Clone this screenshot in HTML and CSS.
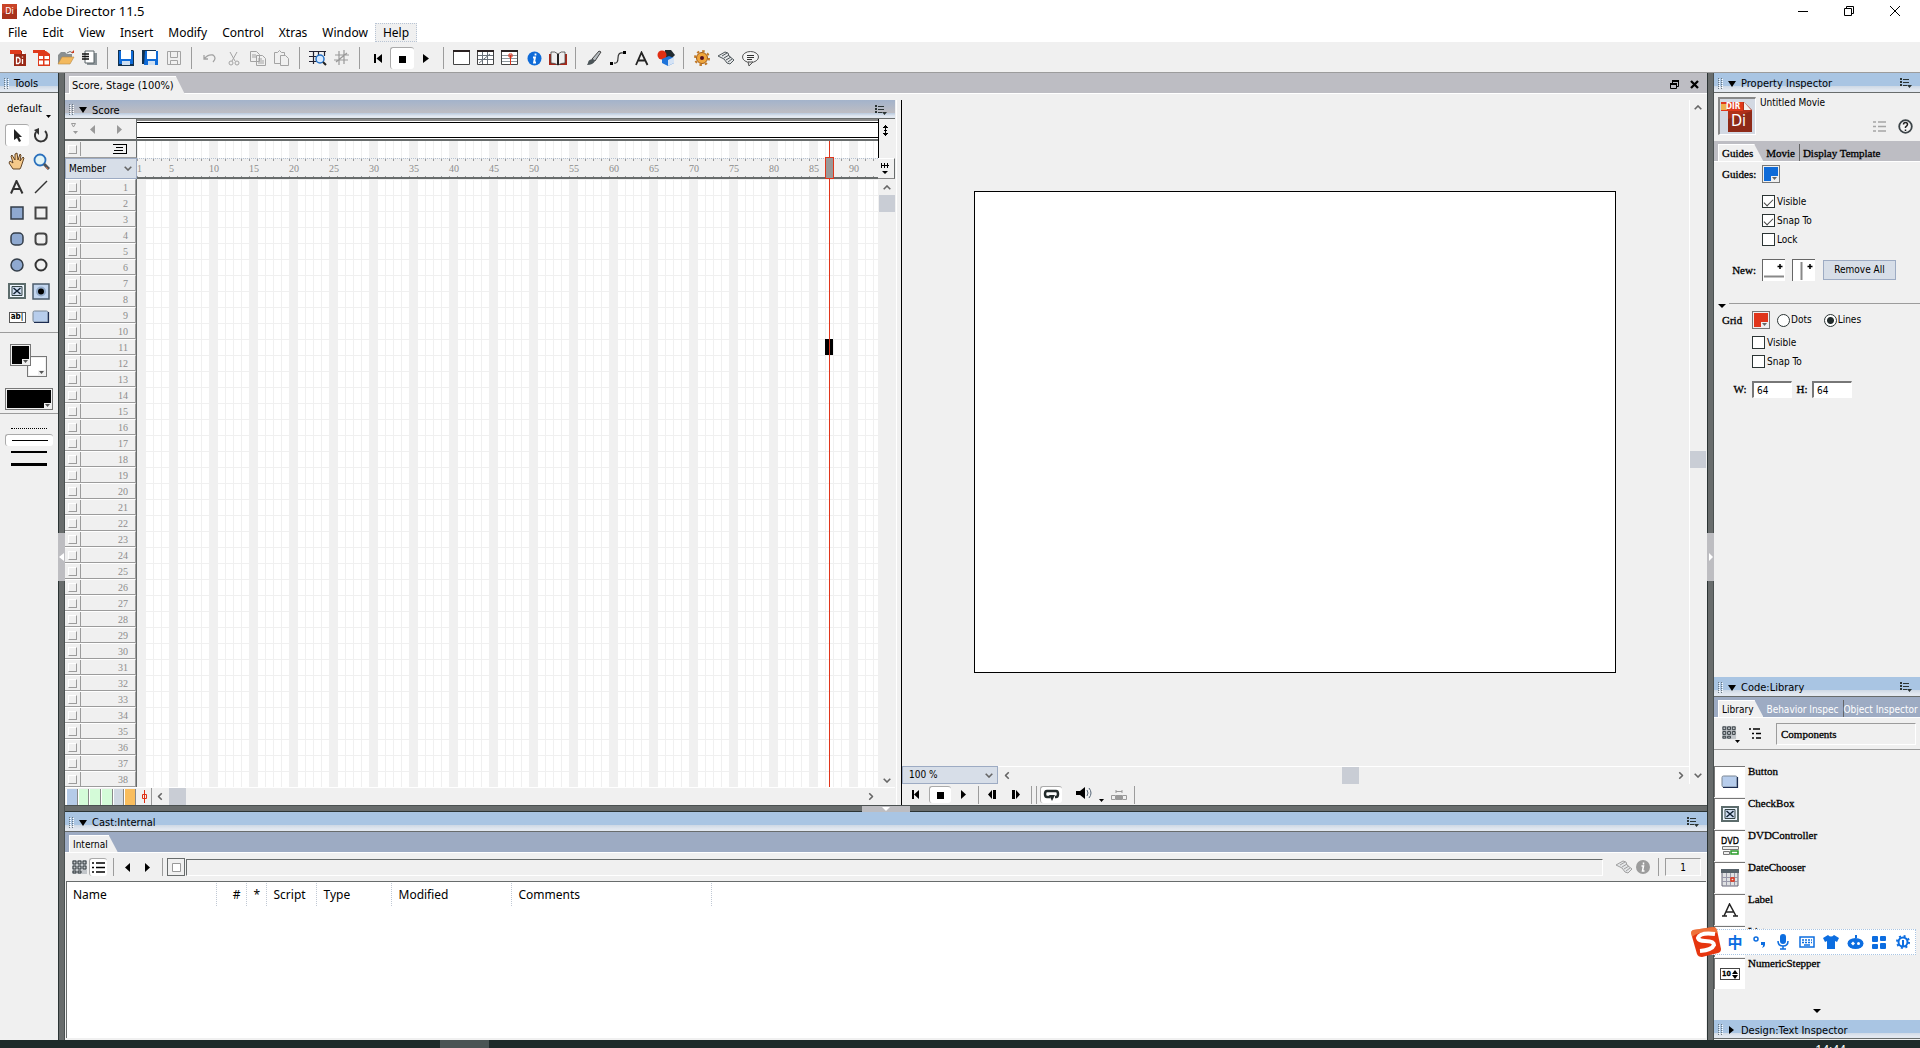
FILE: index.html
```html
<!DOCTYPE html>
<html lang="en">
<head>
<meta charset="utf-8">
<title>Adobe Director 11.5</title>
<link rel="stylesheet" href="styles.css">
</head>
<body>
<svg class="defs" width="0" height="0" aria-hidden="true">
  <symbol id="i-menu" viewBox="0 0 12 10"><path d="M0 0h2v2H0zM0 3h2v2H0zM0 6h2v2H0zM3 1h6v1H3zM3 4h6v1H3zM3 7h4v1H3zM7 7h5L9.500 10z" fill="#2b3434"/></symbol>
  <symbol id="i-grip" viewBox="0 0 5 12"><path d="M0 0h1v1H0zM0 2h1v1H0zM0 4h1v1H0zM0 6h1v1H0zM0 8h1v1H0zM0 10h1v1H0zM3 0h1v1H3zM3 2h1v1H3zM3 4h1v1H3zM3 6h1v1H3zM3 8h1v1H3zM3 10h1v1H3z" fill="#6c7880"/><path d="M1 1h1v1H1zM1 3h1v1H1zM1 5h1v1H1zM1 7h1v1H1zM1 9h1v1H1zM4 1h1v1H4zM4 3h1v1H4zM4 5h1v1H4zM4 7h1v1H4zM4 9h1v1H4z" fill="#fff"/></symbol>
  <symbol id="i-down" viewBox="0 0 8 6"><path d="M0 0h8L4 6z"/></symbol>
  <symbol id="i-chev" viewBox="0 0 8 5"><path d="M.7.700L4 4 7.300.7" fill="none" stroke="currentColor" stroke-width="1.600"/></symbol>
  <symbol id="i-checkbox" viewBox="0 0 18 16"><path d="M1 1h16v14H1z" fill="#eef6ff" stroke="#5c6c6c" stroke-width="2"/><path d="M4 3.500h10v9H4z" fill="#cfdcf0" stroke="#344"/><path d="M5.500 5l7 6M12.500 5l-7 6" stroke="#123" stroke-width="1.500"/></symbol>
  <symbol id="i-button" viewBox="0 0 18 14"><rect x="1" y="1" width="15" height="11" rx="1.500" fill="#b7cdec" stroke="#7b8794"/><path d="M2 12.500h14.500V2" fill="none" stroke="#1c2c50" stroke-width="1.200"/></symbol>
  <symbol id="i-thumbs" viewBox="0 0 16 16"><path d="M0 1h15v14H0z" fill="#c2c6ca"/><path d="M1 2h3v3H1zM6 2h3v3H6zM11 2h3v3h-3zM1 7h3v3H1zM6 7h3v3H6zM11 7h3v3h-3zM1 12h3v2H1zM6 12h3v2H6z" fill="none" stroke="#30383c"/></symbol>
  <symbol id="i-behavior" viewBox="0 0 18 14"><path d="M1 5l7-4 3 1 1 3 5 4-4 4-3-1-3-4z" fill="#e4e6e8" stroke="currentColor"/><path d="M5 5l5-3M7 7l5-3M9 9l5-3M11 11l4-3" stroke="currentColor"/></symbol>
  <symbol id="i-di" viewBox="0 0 16 16"><path d="M0 0h16v16H0z" fill="#a8321c"/><path d="M0 0h16v5L0 10z" fill="#c94427"/></symbol>
</svg>

<header class="titlebar">
  <span class="app-icon"><svg width="15" height="15"><use href="#i-di"/></svg><b>Di</b></span>
  <h1>Adobe Director 11.5</h1>
  <div class="window-buttons">
    <button aria-label="Minimize"><svg width="10" height="10"><path d="M0 5.500h10" stroke="#000"/></svg></button>
    <button aria-label="Restore"><svg width="10" height="10"><path d="M.5 2.500h7v7h-7zM2.500 2.500v-2h7v7h-2" fill="none" stroke="#000"/></svg></button>
    <button aria-label="Close"><svg width="10" height="10"><path d="M0 0l10 10M10 0L0 10" stroke="#000"/></svg></button>
  </div>
</header>
<nav class="menubar">
  <a href="#">File</a><a href="#">Edit</a><a href="#">View</a><a href="#">Insert</a><a href="#">Modify</a><a href="#">Control</a><a href="#">Xtras</a><a href="#">Window</a><a href="#" class="hot">Help</a>
</nav>

<div class="toolbar">
  <div class="group">
    <button aria-label="New movie"><svg width="18" height="18"><path d="M5 2h8l4 3v12H5z" fill="#9a2a18"/><path d="M1 1h11v4H1z" fill="#df3a1c"/><path d="M13 1v4h4z" fill="#fff"/><path d="M7.500 8.500h2l1.500 1.500v3l-1.500 1.500h-2zM13.500 10v5M13.500 7.500v1" fill="none" stroke="#fff" stroke-width="1.300"/></svg></button>
    <button aria-label="New cast"><svg width="18" height="18"><path d="M5 2h8l4 3v12H5z" fill="#df3a1c"/><path d="M0 1h12v3H0z" fill="#df3a1c"/><path d="M6 7h4v3H6zM11.500 7H16v3h-4.500zM6 11.500h4v4H6zM11.500 11.500H16v4h-4.500z" fill="#fff"/></svg></button>
    <button aria-label="Open"><svg width="18" height="16"><path d="M1 14V5l3-3h4l2 2h5v3" fill="#8a8f90"/><path d="M1 14L5 7h12l-4 7z" fill="#f3b95e" stroke="#b98a45" stroke-width=".6"/><path d="M10 3q3-3 6 0" fill="none" stroke="#777"/><path d="M14 3h3V0z" fill="#c93a20"/></svg></button>
    <button aria-label="Import"><svg width="16" height="16"><path d="M5 3h10v12H5z" fill="#8c9498"/><path d="M3 1h9v12H3z" fill="#fff" stroke="#596266"/><path d="M0 4h7M0 6.500h7M0 9h7" stroke="#111" stroke-width="1.300"/></svg></button>
  </div>
  <div class="group">
    <button aria-label="Save"><svg width="16" height="16"><path d="M0 0h15l1 1v15H0z" fill="#12314f"/><path d="M1 1h14v13H1z" fill="#0f6bd8"/><path d="M3 0h10v9H3z" fill="#fff"/><path d="M4 11h8v4H4z" fill="#cfe0f2"/></svg></button>
    <button aria-label="Save all"><svg width="17" height="16"><path d="M0 0h14v14H0z" fill="#12314f"/><path d="M3 1h13v14H2z" fill="#0f6bd8"/><path d="M5 1h9v8H5z" fill="#fff"/><path d="M6 11h7v4H6z" fill="#cfe0f2"/></svg></button>
    <button aria-label="Save as Shockwave"><svg width="15" height="15"><path d="M.5.500h13v13H.5zM3.500.500v6h7v-6M3.500 13.500v-4h7v4" fill="none" stroke="#a3a3a3"/></svg></button>
  </div>
  <div class="group">
    <button aria-label="Undo"><svg width="14" height="10"><path d="M1 2v4h4M1 6q4-5 9-4 4 3 0 7" fill="none" stroke="#a3a3a3" stroke-width="1.300"/></svg></button>
    <button aria-label="Cut"><svg width="12" height="15"><path d="M2 1l5 9M9 1L4 10" fill="none" stroke="#a3a3a3"/><circle cx="3" cy="12" r="2" fill="none" stroke="#a3a3a3"/><circle cx="9" cy="12" r="2" fill="none" stroke="#a3a3a3"/></svg></button>
    <button aria-label="Copy"><svg width="16" height="15"><path d="M.5.500h6l3 3v7h-9z M6.500 4.500h6l3 3v7h-9z" fill="#f0f0f0" stroke="#a3a3a3"/><path d="M2 4h4M2 6h4M8 8h4M8 10h6M8 12h6" stroke="#a3a3a3"/></svg></button>
    <button aria-label="Paste"><svg width="16" height="16"><path d="M.5 2.500h3l2-2 2 2h3v11H.5z" fill="none" stroke="#a3a3a3"/><path d="M6.500 5.500h5l3 3v7h-8z" fill="#f0f0f0" stroke="#a3a3a3"/></svg></button>
  </div>
  <div class="group">
    <button aria-label="Find cast member"><svg width="18" height="16"><path d="M0 1.500h17M0 6.500h8M0 11.500h8M4.500 1v13M9.500 1v4M15.500 1v5" stroke="#223" stroke-width="1.200"/><circle cx="11" cy="9" r="4" fill="#d6e9ff" stroke="#2672c8" stroke-width="1.500"/><path d="M14 12l3 3" stroke="#222" stroke-width="2"/></svg></button>
    <button aria-label="Exchange cast members"><svg width="16" height="16"><path d="M1 5h14M0 10h14M5 1v14M10 0v14M2 12l11-9" stroke="#999" stroke-width="1.200" fill="none"/></svg></button>
  </div>
  <div class="group">
    <button aria-label="Rewind"><svg width="8" height="9"><path d="M0 0h2v9H0zM8 0v9L2.500 4.500z"/></svg></button>
    <button aria-label="Stop" class="pressed"><svg width="8" height="8"><path d="M0 1h7v7H0z"/></svg></button>
    <button aria-label="Play"><svg width="6" height="9"><path d="M0 0v9l6-4.500z"/></svg></button>
  </div>
  <div class="group">
    <button aria-label="Stage"><svg width="18" height="16"><path d="M.5.500h16v14H.5z" fill="#fff" stroke="#444"/><path d="M0 0h17v2H0z" fill="#2a2222"/></svg></button>
    <button aria-label="Cast"><svg width="18" height="16"><path d="M.5.500h16v14H.5z" fill="#fff" stroke="#444"/><path d="M0 0h17v2H0z" fill="#2a2222"/><path d="M1 5.500h15M1 9.500h15M5.500 2v12M10.500 2v12M2 13l11-9" stroke="#687078"/></svg></button>
    <button aria-label="Score"><svg width="18" height="16"><path d="M.5.500h16v14H.5z" fill="#fff" stroke="#444"/><path d="M0 0h17v2H0z" fill="#2a2222"/><path d="M1 5.500h15M1 8.500h15M1 11.500h15" stroke="#8d979d"/><path d="M9.500 5v10M8 4h3v3H8z" stroke="#d8321c" fill="none"/></svg></button>
    <button aria-label="Property inspector"><svg width="15" height="15"><circle cx="7.500" cy="7.500" r="7" fill="#0f6bd8"/><path d="M8.500 2.500v2M6 6.500h2l-1 5h2" stroke="#fff" stroke-width="1.800" fill="none"/></svg></button>
    <button aria-label="Library"><svg width="18" height="15"><path d="M0 3h18v11H0z" fill="#a8281a"/><path d="M2 1q4-1 7 2 3-3 7-2v11q-4 0-7 2-3-2-7-2z" fill="#eee" stroke="#444" stroke-width=".8"/><path d="M9 3v11" stroke="#222" stroke-width="2"/></svg></button>
  </div>
  <div class="group">
    <button aria-label="Paint"><svg width="16" height="16"><path d="M6 9l7-8 2 1-6 9z" fill="#b6bcc0" stroke="#333" stroke-width=".9"/><path d="M6 9q-4 1-4 4l-1 2q6 0 8-4z" fill="#4b5458"/></svg></button>
    <button aria-label="Vector shape"><svg width="16" height="14"><path d="M4 12q4 1 4-5t5-5" fill="none" stroke="#333" stroke-width="1.200"/><path d="M0 11h3v3H0zM13 0h3v3h-3z"/></svg></button>
    <button aria-label="Text"><svg width="14" height="15"><path d="M1 14L6.500 1.500 12.500 14M3 9.500h7.500" fill="none" stroke="#222" stroke-width="1.800"/></svg></button>
    <button aria-label="Shockwave 3D"><svg width="18" height="16"><path d="M8 0h6l4 5-5 5-6-3z" fill="#222b30"/><circle cx="5" cy="5" r="4.500" fill="#e02f14"/><path d="M5 9l7-3 5 2v5l-6 3-6-3z" fill="#1f74da"/><path d="M11 10l6-3v6l-6 3z" fill="#d5e3f5"/></svg></button>
  </div>
  <div class="group">
    <button aria-label="Behaviors"><svg width="16" height="16"><circle cx="8" cy="8" r="5.500" fill="#f0a63c" stroke="#a05d1c"/><circle cx="8" cy="8" r="7" fill="none" stroke="#c27a28" stroke-width="2" stroke-dasharray="2.500 3"/><circle cx="8" cy="8" r="2" fill="#512"/></svg></button>
    <button aria-label="Script"><svg width="18" height="14" color="#50585c"><use href="#i-behavior"/></svg></button>
    <button aria-label="Message"><svg width="17" height="15"><ellipse cx="8.500" cy="6" rx="8" ry="5.500" fill="#f4f4f4" stroke="#555"/><path d="M6 11l1 4 4-4z" fill="#ddd" stroke="#555"/><path d="M5 4.500h7M5 6.500h7M5 8.500h5" stroke="#333"/></svg></button>
  </div>
</div>

<div class="workspace">
  <aside class="tools">
    <div class="panel-head"><svg width="5" height="12"><use href="#i-grip"/></svg><h2>Tools</h2></div>
    <button class="tool-view">default<svg width="5" height="3"><path d="M0 0h5L2.500 3z"/></svg></button>
    <div class="tool-grid">
      <button class="pressed" aria-label="Arrow"><svg width="12" height="15"><path d="M2 1v11l3-2 2 4 2-1-2-4h3z" fill="#222"/></svg></button>
      <button aria-label="Rotate"><svg width="16" height="16"><path d="M3 5a6 6 0 1 0 9-1" fill="none" stroke="#333" stroke-width="2"/><path d="M6 1L1 3l5 5z" fill="#333"/></svg></button>
      <button aria-label="Hand"><svg width="18" height="18"><path d="M5 17l-4-6 1-2 3 2-2-7 1-1 3 5V2l2-1 1 7 2-6 1 1-1 6 3-4 1 1-3 9-1 2z" fill="#f5c98a" stroke="#553617" stroke-width=".9"/></svg></button>
      <button aria-label="Magnifier"><svg width="17" height="17"><circle cx="7" cy="7" r="5.500" fill="#e2f4f6" stroke="#2a70bd" stroke-width="1.800"/><path d="M11 11l5 5" stroke="#4c545c" stroke-width="3"/><path d="M13 14l2 2" stroke="#d9662f"/></svg></button>
      <button aria-label="Text"><svg width="14" height="14"><path d="M1 13.500L6.500 1 12.500 13.500M3 9h7.500" fill="none" stroke="#333" stroke-width="2"/></svg></button>
      <button aria-label="Line"><svg width="14" height="14"><path d="M1 13L13 1" stroke="#333" stroke-width="1.500"/></svg></button>
      <button aria-label="Filled rectangle"><svg width="14" height="14"><path d="M1 1h12v12H1z" fill="#8fa9d0" stroke="#333d48" stroke-width="1.500"/></svg></button>
      <button aria-label="Rectangle"><svg width="14" height="14"><path d="M1.500 1.500h11v11h-11z" fill="none" stroke="#444" stroke-width="2"/></svg></button>
      <button aria-label="Filled round rectangle"><svg width="14" height="14"><rect x="1" y="1" width="12" height="12" rx="4" fill="#8fa9d0" stroke="#333d48" stroke-width="1.500"/></svg></button>
      <button aria-label="Round rectangle"><svg width="14" height="14"><rect x="1.500" y="1.500" width="11" height="11" rx="3" fill="none" stroke="#444" stroke-width="2"/></svg></button>
      <button aria-label="Filled ellipse"><svg width="14" height="14"><circle cx="7" cy="7" r="6" fill="#8fa9d0" stroke="#333d48" stroke-width="1.500"/></svg></button>
      <button aria-label="Ellipse"><svg width="14" height="14"><circle cx="7" cy="7" r="5.500" fill="none" stroke="#333" stroke-width="2"/></svg></button>
      <button aria-label="Check box"><svg width="18" height="16"><use href="#i-checkbox"/></svg></button>
      <button aria-label="Radio button"><svg width="18" height="17"><path d="M1 1h16v15H1z" fill="#c3d6ef" stroke="#4c5c6c" stroke-width="1.500"/><circle cx="9" cy="8.500" r="5" fill="#93abc9"/><circle cx="9" cy="8.500" r="3"/></svg></button>
      <button aria-label="Field" class="field-tool"><span>ab|</span></button>
      <button aria-label="Push button"><svg width="18" height="14"><use href="#i-button"/></svg></button>
    </div>
    <div class="tool-colors">
      <button class="swatch back" aria-label="Background color"><svg width="5" height="3"><path d="M0 0h5L2.500 3z" fill="#555"/></svg></button>
      <button class="swatch fore" aria-label="Foreground color"><svg width="5" height="3"><path d="M0 0h5L2.500 3z" fill="#555"/></svg></button>
      <button class="swatch pattern" aria-label="Pattern"><svg width="5" height="3"><path d="M0 0h5L2.500 3z" fill="#555"/></svg></button>
    </div>
    <div class="line-widths">
      <button aria-label="No line"><i class="dotted"></i></button>
      <button aria-label="1 pixel line" class="pressed"><i></i></button>
      <button aria-label="2 pixel line"><i class="two"></i></button>
      <button aria-label="3 pixel line"><i class="three"></i></button>
    </div>
  </aside>

  <div class="splitter"><button aria-label="Collapse tools"><svg width="5" height="8"><path d="M5 0v8L0 4z" fill="#fff"/></svg></button></div>

  <main>
    <div class="doc-tabs">
      <a href="#" class="tab active">Score, Stage (100%)</a>
      <div class="doc-buttons">
        <button aria-label="Restore document"><svg width="9" height="9"><path d="M.5 3.500h6v5h-6zM2.500 3V1.500h6v5H7" fill="none" stroke="#000"/><path d="M0 3h7v2H0zM2 0h7v2H2z"/></svg></button>
        <button aria-label="Close document"><svg width="9" height="9"><path d="M1 1l7 7M8 1L1 8" stroke="#000" stroke-width="2.300"/></svg></button>
      </div>
    </div>

    <div class="documents">
      <section class="score">
        <div class="panel-head inactive"><svg width="5" height="12"><use href="#i-grip"/></svg><svg width="8" height="6"><use href="#i-down"/></svg><h2>Score</h2><button aria-label="Score options"><svg width="12" height="10"><use href="#i-menu"/></svg></button></div>
        <div class="score-grid">
          <div class="marker-nav">
            <svg width="8" height="12"><path d="M1.500.500h4L3.500 4z" fill="none" stroke="#999"/><path d="M3 8h5L5.500 11z" fill="#999"/></svg>
            <svg width="5" height="9"><path d="M5 0v9L0 4.500z" fill="#999"/></svg>
            <svg width="5" height="9"><path d="M0 0v9l5-4.500z" fill="#999"/></svg>
          </div>
          <div class="marker-track"></div>
          <button class="corner edge" aria-label="Show effects channels"><svg width="5" height="11"><path d="M2 0h1v11H2zM0 2h5v1H0zM1 1h3v1H1zM0 8h5v1H0zM1 9h3v1H1zM1 5h3v1H1z"/></svg></button>
          <div class="script-head"><label class="toggle"><input type="checkbox" aria-label="Script channel"></label><svg width="14" height="10"><path d="M0 .5h13M13.500 0v10M0 9.500h13M3 3.500h7M1 6.500h9" stroke="#000"/></svg></div>
          <div class="script-track"></div>
          <div class="corner edge"></div>
          <div class="member-select"><select aria-label="Display"><option>Member</option></select><svg width="8" height="5"><use href="#i-chev"/></svg></div>
          <div class="ruler"><span>1</span><span>5</span><span>10</span><span>15</span><span>20</span><span>25</span><span>30</span><span>35</span><span>40</span><span>45</span><span>50</span><span>55</span><span>60</span><span>65</span><span>70</span><span>75</span><span>80</span><span>85</span><span>90</span></div>
          <button class="corner raised" aria-label="Zoom"><svg width="8" height="12"><path d="M0 2h8v1H0zM0 0h1v5H0zM3 0h1v5H3zM6 0h1v5H6zM1 8h6L4 11z"/></svg></button>
          <ol class="channels" id="channels"></ol>
          <div class="frames"></div>
          <div class="scroll-v"><svg width="8" height="5" class="point-up"><use href="#i-chev"/></svg><i></i><svg width="8" height="5" class="end"><use href="#i-chev"/></svg></div>
          <div class="playhead"><b></b><i></i></div>
        </div>
        <div class="score-foot">
          <div class="colors"><i class="c1"></i><i class="c2"></i><i class="c3"></i><i class="c3"></i><i class="c4"></i><i class="c5"></i></div>
          <button aria-label="Center current frame"><svg width="7" height="13"><path d="M3.500 0v13M1.500 4.500h4v4h-4z" stroke="#e02f14" fill="none"/></svg></button>
          <div class="scroll-h"><svg width="8" height="5" class="point-left"><use href="#i-chev"/></svg><i></i><svg width="8" height="5" class="point-right end"><use href="#i-chev"/></svg></div>
        </div>
      </section>

      <section class="stage">
        <div class="stage-view">
          <div class="stage-area"><div class="canvas"></div></div>
          <div class="scroll-v"><svg width="8" height="5" class="point-up"><use href="#i-chev"/></svg><i></i></div>
        </div>
        <div class="stage-zoom">
          <div class="zoom-select"><select aria-label="Zoom"><option>100 %</option></select><svg width="8" height="5"><use href="#i-chev"/></svg></div>
          <div class="scroll-h"><svg width="8" height="5" class="point-left"><use href="#i-chev"/></svg><i></i><svg width="8" height="5" class="point-right"><use href="#i-chev"/></svg></div>
          <div class="scroll-corner"><svg width="8" height="5"><use href="#i-chev"/></svg></div>
        </div>
        <div class="stage-controls">
          <button aria-label="Rewind"><svg width="7" height="9"><path d="M0 0h2v9H0zM7 0v9L2 4.500z"/></svg></button>
          <button aria-label="Stop" class="pressed"><svg width="7" height="7"><path d="M0 0h7v7H0z"/></svg></button>
          <button aria-label="Play"><svg width="5" height="9"><path d="M0 0v9l5-4.500z"/></svg></button>
          <hr>
          <button aria-label="Step backward"><svg width="8" height="9"><path d="M4 0v9L0 4.500zM5 0h3v9H5z"/></svg></button>
          <button aria-label="Step forward"><svg width="8" height="9"><path d="M4 0v9l4-4.500zM0 0h3v9H0z"/></svg></button>
          <hr class="double">
          <button aria-label="Loop" class="pressed"><svg width="17" height="12"><path d="M7 8H4Q2 8 2 5t2-3h9q2 0 2 3t-2 3h-1" fill="none" stroke="#222b2b" stroke-width="2.500"/><path d="M6 6h6l-3 6z" fill="#222b2b"/></svg></button>
          <button aria-label="Volume" class="wide"><svg width="28" height="15"><path d="M0 4h4l5-4v12L4 8H0z"/><path d="M11 3q2 3 0 6M13 1q4 5 0 10" fill="none" stroke="#567"/><path d="M23 12h5l-2.500 3z"/></svg></button>
          <button aria-label="Selected frames only"><svg width="16" height="10"><path d="M.5 5.500h4v4h-4zM11.500 5.500h4v4h-4zM5 1.500h6M5 0v3M11 0v3" fill="none" stroke="#999"/><path d="M5 5h6v5H5z" fill="#999"/></svg></button>
          <hr>
        </div>
      </section>
    </div>

    <div class="splitter horizontal"><button aria-label="Collapse cast"><svg width="8" height="4"><path d="M0 0h8L4 4z" fill="#fff"/></svg></button></div>

    <section class="cast">
      <div class="panel-head"><svg width="5" height="12"><use href="#i-grip"/></svg><svg width="8" height="6"><use href="#i-down"/></svg><h2>Cast:Internal</h2><button aria-label="Cast options"><svg width="12" height="10"><use href="#i-menu"/></svg></button></div>
      <div class="tabs blue"><a href="#" class="tab active">Internal</a></div>
      <div class="cast-bar">
        <button aria-label="Choose cast"><svg width="16" height="16"><use href="#i-thumbs"/></svg></button>
        <button aria-label="List view" class="pressed"><svg width="13" height="11"><path d="M0 1h2M0 5.500h2M0 10h2M4 1h9M4 5.500h9M4 10h9" stroke="#000" stroke-width="1.500"/></svg></button>
        <hr>
        <button aria-label="Previous member"><svg width="5" height="9"><path d="M5 0v9L0 4.500z"/></svg></button>
        <button aria-label="Next member"><svg width="5" height="9"><path d="M0 0v9l5-4.500z"/></svg></button>
        <hr>
        <button aria-label="Drag member" class="drag"><svg width="9" height="9"><path d="M.5.500h8v8h-8z" fill="#fff" stroke="#999"/></svg></button>
        <input type="text" class="member-name" aria-label="Member name">
        <button aria-label="Member script"><svg width="18" height="14" color="#a0a0a0"><use href="#i-behavior"/></svg></button>
        <button aria-label="Member properties" class="info"><svg width="14" height="14"><circle cx="7" cy="7" r="7" fill="#9c9c9c"/><path d="M7.500 2.500v2M5.500 6h2l-1 5h2" stroke="#fff" stroke-width="1.500" fill="none"/></svg></button>
        <hr>
        <input type="text" class="member-number" aria-label="Member number" value="1">
      </div>
      <div class="cast-list">
        <table>
          <thead><tr><th class="w-name">Name</th><th class="w-num">#</th><th class="w-mod">*</th><th class="w-script">Script</th><th class="w-type">Type</th><th class="w-modified">Modified</th><th class="w-comments">Comments</th></tr></thead>
        </table>
      </div>
    </section>
  </main>

  <div class="splitter"><button aria-label="Collapse inspectors"><svg width="4" height="8"><path d="M0 0v8l4-4z" fill="#fff"/></svg></button></div>

  <aside class="inspectors">
    <section class="properties">
      <div class="panel-head"><svg width="5" height="12"><use href="#i-grip"/></svg><svg width="8" height="6"><use href="#i-down"/></svg><h2>Property Inspector</h2><button aria-label="Inspector options"><svg width="12" height="10"><use href="#i-menu"/></svg></button></div>
      <div class="movie">
        <div class="movie-icon"><svg width="34" height="34"><path d="M8 3h16l8 8v22H8z" fill="#b03019"/><path d="M8 20L32 12v21H8z" fill="#8e2a18"/><path d="M1 3h22v9H1z" fill="#e0391b"/><path d="M1 5h6v6H1z" fill="#eeb04e"/><path d="M24 3v8h7z" fill="#f2f2f2"/></svg><span class="dir">DIR</span><span class="di">Di</span></div>
        <p>Untitled Movie</p>
        <button aria-label="List view mode"><svg width="13" height="11"><path d="M0 1h3M0 5.500h3M0 10h3M5 1h8M5 5.500h8M5 10h8" stroke="#a5a5a5" stroke-width="1.500"/></svg></button>
        <button aria-label="Help"><svg width="15" height="15"><circle cx="7.500" cy="7.500" r="6.300" fill="#f4f4f4" stroke="#3c4448" stroke-width="1.800"/><path d="M5.500 5.500q0-2 2-2t2 2q0 1-2 2.500v1M7.500 10.500v1.500" fill="none" stroke="#222" stroke-width="1.500"/></svg></button>
      </div>
      <div class="tabs grey song"><a href="#" class="tab active">Guides</a><a href="#">Movie</a><a href="#" class="ruled">Display Template</a></div>
      <form class="guides">
        <div class="row"><span class="name">Guides:</span><button type="button" class="swatch mini blue" aria-label="Guide color"><svg width="5" height="3"><path d="M0 0h5L2.500 3z" fill="#666"/></svg></button></div>
        <div class="checks">
          <label><input type="checkbox" checked>Visible</label>
          <label><input type="checkbox" checked>Snap To</label>
          <label><input type="checkbox">Lock</label>
        </div>
        <div class="row new"><span class="name">New:</span>
          <button type="button" class="guide-new" aria-label="New horizontal guide"><svg width="21" height="20"><path d="M0 15.500h20" stroke="#888" stroke-width="2"/><path d="M16 3v5M13.500 5.500h5" stroke="#000" stroke-width="1.500"/></svg></button>
          <button type="button" class="guide-new" aria-label="New vertical guide"><svg width="21" height="20"><path d="M7.500 1v18" stroke="#888" stroke-width="2"/><path d="M16 3v5M13.500 5.500h5" stroke="#000" stroke-width="1.500"/></svg></button>
          <button type="button" class="remove">Remove All</button></div>
        <div class="fold"><svg width="8" height="4"><path d="M0 0h8L4 4z"/></svg></div>
        <div class="row grid-row"><span class="name">Grid</span><button type="button" class="swatch mini red" aria-label="Grid color"><svg width="5" height="3"><path d="M0 0h5L2.500 3z" fill="#666"/></svg></button>
          <label><input type="radio" name="grid">Dots</label><label class="lines"><input type="radio" name="grid" checked>Lines</label></div>
        <div class="checks grid-checks">
          <label><input type="checkbox">Visible</label>
          <label><input type="checkbox">Snap To</label>
        </div>
        <div class="row size"><label for="gw">W:</label><input id="gw" type="text" value="64"><label for="gh">H:</label><input id="gh" type="text" value="64"></div>
      </form>
    </section>
    <section class="library">
      <div class="panel-head"><svg width="5" height="12"><use href="#i-grip"/></svg><svg width="8" height="6"><use href="#i-down"/></svg><h2>Code:Library</h2><button aria-label="Library options"><svg width="12" height="10"><use href="#i-menu"/></svg></button></div>
      <div class="tabs blue"><a href="#" class="tab active">Library</a><a href="#">Behavior Inspec</a><a href="#" class="ruled">Object Inspector</a></div>
      <div class="library-bar">
        <button aria-label="Library list"><svg width="18" height="18"><use href="#i-thumbs" width="15" height="15"/><path d="M13 15h5l-2.500 3z"/></svg></button>
        <button aria-label="Library view"><svg width="12" height="11"><path d="M0 1h2M4 1h7M3 5.500h2M7 5.500h5M3 10h2M7 10h5" stroke="#000" stroke-width="1.500"/></svg></button>
        <input type="text" aria-label="Category" value="Components">
      </div>
      <ul class="components">
        <li><span><svg width="18" height="14"><use href="#i-button"/></svg></span>Button</li>
        <li><span><svg width="18" height="16"><use href="#i-checkbox"/></svg></span>CheckBox</li>
        <li><span class="dvd"><b>DVD</b><svg width="17" height="9"><path d="M.5.500h16v3H.5zM1.500 5.500h6v3h-6z" fill="#eee" stroke="#777"/><path d="M9 5h7v3H9z" fill="none" stroke="#2a9c2a" stroke-width="1.500"/></svg></span>DVDController</li>
        <li><span><svg width="18" height="18"><path d="M1 1h16v16H1z" fill="#dfe1e3" stroke="#667"/><path d="M0 0h18v4H0z" fill="#56626a"/><path d="M1 8.500h16M1 12.500h16M5.500 4v13M9.500 4v13M13.500 4v13" stroke="#99a"/><path d="M10 9h3v3h-3z" fill="none" stroke="#e02f14" stroke-width="1.300"/></svg></span>DateChooser</li>
        <li><span><svg width="16" height="14"><path d="M2 13L7.500 1 14 13M4 9h8M0 13h5M11 13h5" fill="none" stroke="#222" stroke-width="1.500"/></svg></span>Label</li>
        <li><span></span>List</li>
        <li><span><b class="stepper">10<svg width="6" height="9"><path d="M0 4l3-4 3 4zM0 5h6L3 9z"/></svg></b></span>NumericStepper</li>
      </ul>
      <button class="more" aria-label="More components"><svg width="8" height="4"><path d="M0 0h8L4 4z"/></svg></button>
    </section>
    <section class="panel-head design"><svg width="5" height="12"><use href="#i-grip"/></svg><svg width="8" height="8"><path d="M1 0v8l5-4z"/></svg><h2>Design:Text Inspector</h2></section>
  </aside>
</div>

<footer class="taskbar"><i></i><time>14:44</time></footer>

<div class="ime">
  <svg class="ime-logo" width="32" height="32"><path d="M1 7Q1 5 3 4l20-3q3 0 4 3l4 19q0 3-3 4L12 31q-4 0-5-3z" fill="#e6360f"/><path d="M1 7Q1 5 3 4l20-3q3 0 4 3l1 3Q10 4 2 11z" fill="#f39a55" opacity=".6"/><path d="M25 8Q10 6 8 12q1 3 7 3 9 0 9 4-2 5-14 6" fill="none" stroke="#fff" stroke-width="4"/></svg>
  <button aria-label="Input language">中</button>
  <button aria-label="Punctuation"><svg width="12" height="12"><circle cx="3" cy="3" r="2" fill="none" stroke="#0c6de0" stroke-width="1.500"/><path d="M8 6h4v3q0 2-3 3 1-1 1-3H8z"/></svg></button>
  <button aria-label="Voice"><svg width="12" height="16"><rect x="3" y="0" width="6" height="10" rx="3"/><path d="M1 7q0 5 5 5t5-5M6 12v3M3 15h6" fill="none" stroke="#0c6de0" stroke-width="1.500"/></svg></button>
  <button aria-label="Keyboard"><svg width="16" height="12"><path d="M1 1h14v10H1z" fill="none" stroke="#0c6de0" stroke-width="1.500"/><path d="M3 4h10M3 6.500h10" stroke="#0c6de0" stroke-width="1.500" stroke-dasharray="2 1"/><path d="M5 9h6" stroke="#0c6de0" stroke-width="1.500"/></svg></button>
  <button aria-label="Skin"><svg width="16" height="14"><path d="M5 0q3 3 6 0l5 3-2 4-2-1v8H4V6L2 7 0 3z"/></svg></button>
  <button aria-label="Assistant"><svg width="17" height="14"><path d="M8 0h2v3H8z"/><ellipse cx="8.500" cy="8.500" rx="8" ry="5.500"/><path d="M4 8.500l2-2 2 2-2 2z" fill="#fff"/><circle cx="11.500" cy="8.500" r="1.500" fill="#fff"/></svg></button>
  <button aria-label="Toolbox"><svg width="14" height="13"><rect width="6" height="6" rx="1"/><rect x="8" width="6" height="5" rx="1"/><rect y="8" width="6" height="5" rx="1"/><rect x="8" y="7" width="6" height="6" rx="1"/></svg></button>
  <button aria-label="Settings"><svg width="14" height="14"><circle cx="7" cy="7" r="4.500" fill="none" stroke="#0c6de0" stroke-width="2"/><circle cx="7" cy="7" r="6" fill="none" stroke="#0c6de0" stroke-width="2" stroke-dasharray="2 2.700"/><path d="M7 5v7" stroke="#0c6de0" stroke-width="2"/></svg></button>
</div>
<script src="score.js"></script>
</body>
</html>
```
FILE: styles.css
```css
:root {
  --face: #f0f0f0;
  --dark: #686c6c;
  --line: #9c9c9c;
  --blue: #a9c5e3;
  --ui: "DejaVu Sans Condensed", "Noto Sans", sans-serif;
  --menu: "Noto Sans", "Noto Sans CJK SC", sans-serif;
  --song: "Liberation Serif", serif;
}
* { box-sizing: border-box; }
body {
  margin: 0;
  height: 100vh;
  display: flex;
  flex-direction: column;
  overflow: hidden;
  background: var(--face);
  color: #000;
  font: 11px/14px var(--ui);
}
button { border: 0; padding: 0; margin: 0; background: none; font: inherit; color: inherit; display: flex; align-items: center; justify-content: center; flex: none; }
input, select { font: inherit; color: inherit; margin: 0; border-radius: 0; }
h1, h2, p, ul, ol { margin: 0; padding: 0; font: inherit; list-style: none; }
a { color: inherit; text-decoration: none; white-space: nowrap; }
svg { display: block; flex: none; }
i { font-style: normal; }
.defs { position: absolute; }
hr { border: 0; margin: 0; width: 1px; height: 18px; background: var(--line); flex: none; }

.titlebar { height: 22px; background: #fff; display: flex; align-items: center; padding-left: 2px; gap: 6px; font: 13px/20px var(--menu); flex: none; }
.app-icon { display: grid; align-items: center; justify-items: center; }
.app-icon > * { grid-area: 1 / 1; }
.app-icon b { color: #fff; font: 9px/12px var(--ui); }
.window-buttons { margin-left: auto; display: flex; padding-right: 2px; }
.window-buttons button { width: 46px; height: 22px; }
.menubar { height: 22px; background: #fff; border-bottom: 2px solid var(--face); display: flex; padding-top: 1px; font: 12px/18px var(--menu); flex: none; }
.menubar a { padding: 0 7px; height: 19px; border: 1px solid #fff; border-right: 0; }
.menubar .hot { background: var(--face); border: 1px dotted #b8c4d4; }

.toolbar { height: 29px; border-bottom: 1px solid var(--line); padding-left: 6px; display: flex; align-items: center; flex: none; }
.group { display: flex; align-items: center; }
.group + .group { margin-left: 5px; border-left: 1px solid var(--line); padding-left: 6px; }
.group button { width: 24px; height: 22px; }
button.pressed { background: #fff; border-radius: 3px; border-left: 1px solid #aaa; border-top: 1px solid #aaa; }

.workspace { flex: 1; min-height: 0; display: grid; grid-template-columns: 58px 7px minmax(0, 1fr) 7px 206px; }
main { display: flex; flex-direction: column; min-height: 0; }
.splitter { background: var(--dark); border-left: 1px solid #2b3434; border-right: 1px solid #4a5050; display: flex; align-items: center; justify-content: center; }
.splitter button { width: 7px; height: 48px; background: #bdbdc1; margin: 0 -1px; }
.splitter.horizontal { height: 7px; border: 0; border-bottom: 1px solid #2b3434; border-top: 1px solid #4a5050; flex: none; }
.splitter.horizontal button { width: 48px; height: 6px; margin: 0; }

.panel-head { height: 20px; padding: 2px 8px 0 4px; display: flex; align-items: center; gap: 5px; background: linear-gradient(var(--blue) 70%, #d0dae6 71%, #e2e8f0 90%); border-bottom: 1px solid var(--dark); flex: none; }
.panel-head.inactive { height: 19px; background: linear-gradient(#a3b3cb, #bdbdc3 70%, #b6c7dc 71%, #e2e8f0 90%); }
.panel-head button { margin-left: auto; margin-bottom: 1px; }
.panel-head h2 { white-space: nowrap; line-height: 16px; padding-top: 1px; }

/* Tools */
.tool-view { margin: 9px 0 0 7px; gap: 4px; align-items: flex-end; }
.tool-view svg { margin-bottom: -2px; }
.tool-grid { display: grid; grid-template-columns: 24px 24px; grid-auto-rows: 22px; row-gap: 4px; margin: 8px 0 0 5px; }
.field-tool span { width: 17px; height: 11px; border: 1px solid #555; background: #fff; font: bold 8px/8px var(--ui); text-align: center; overflow: hidden; }
.tool-colors { border-top: 1px solid var(--line); border-bottom: 1px solid var(--line); margin-top: 4px; height: 82px; display: grid; grid-template-columns: 17px 4px 16px 6px; grid-template-rows: 12px 10px 11px 11px 22px; padding: 11px 0 0 10px; }
.swatch { background: #000; border: 2px solid var(--face); outline: 1px solid #777; outline-offset: -1px; align-items: flex-end; justify-content: flex-end; }
.swatch svg { background: var(--face); padding: 1px; box-sizing: content-box; }
.swatch.fore { grid-area: 1 / 1 / 3 / 3; }
.swatch.back { grid-area: 2 / 2 / 4 / 4; background: #fff; }
.swatch.pattern { grid-area: 5 / 1 / 6 / 5; margin-left: -5px; }
.line-widths { padding: 8px 0 0 5px; width: 53px; }
.line-widths button { width: 48px; height: 12px; }
.line-widths i { width: 36px; height: 1px; background: #000; }
.line-widths i.dotted { background: none; border-top: 1px dotted #000; }
.line-widths i.two { height: 2px; }
.line-widths i.three { height: 3px; }

/* Tab strips */
.doc-tabs { height: 27px; background: linear-gradient(#bdbdc3 20px, #fff 20px, #fff 21px, var(--face) 21px); display: flex; padding: 3px 7px 7px 4px; flex: none; }
.tab.active { background: var(--face); color: #000; clip-path: polygon(0 0, calc(100% - 9px) 0, 100% 100%, 0 100%); box-shadow: inset 1px 1px #fff; }
.doc-tabs .tab { padding: 3px 11px 0 3px; margin-bottom: -1px; }
.doc-buttons { margin-left: auto; display: flex; gap: 11px; padding-right: 1px; }
.tabs { height: 21px; display: flex; border-bottom: 1px solid #fff; padding: 3px 0 0 4px; overflow: hidden; font-size: 10px; flex: none; }
.tabs.blue { background: #9dabc3; color: #fff; }
.tabs.grey { background: #bdbdc3; }
.tabs a { padding: 3px 4px 0 3px; height: 17px; }
.tabs .tab { padding: 3px 10px 0 4px; }
.tabs .ruled { box-shadow: inset 1px 0 #666; padding: 3px 0 0 1px; }

/* Score */
.documents { display: flex; flex: none; }
.score { flex: 0 0 830px; }
.score-grid { display: grid; grid-template-columns: 72px minmax(0, 1fr) 17px; grid-template-rows: 22px 17px 21px auto; position: relative; }
.marker-nav { display: flex; align-items: center; gap: 12px; padding-left: 5px; border-right: 1px solid var(--dark); border-bottom: 2px solid var(--dark); }
.marker-nav svg + svg + svg { margin-left: 10px; }
.marker-track { border-bottom: 2px solid var(--dark); background: linear-gradient(#888 2px, #fff 2px, #fff 3px, #000 3px, #000 4px, #fff 4px, #fff 18px, #000 18px, #000 19px, #fff 19px); }
.corner { background: var(--face); width: 100%; padding-right: 4px; }
.corner.edge { border-left: 1px solid #000; }
.corner.raised { border-top: 1px solid #fff; border-right: 1px solid var(--dark); border-bottom: 1px solid #888; padding-right: 2px; }
.script-head { display: flex; align-items: center; border-right: 1px solid var(--dark); border-bottom: 1px solid var(--line); }
.script-head svg { margin-left: 32px; }
.script-track { background: linear-gradient(90deg, var(--face) 1px, transparent 1px) 0 2px / 8px 100%, linear-gradient(90deg, transparent 32px, var(--face) 32px) 0 2px / 40px 100%, #fff; }
.member-select, .zoom-select { position: relative; background: #d7dee8; border: 1px solid #9dabc3; color: #444; display: flex; align-items: center; }
.member-select select, .zoom-select select { appearance: none; border: 0; background: none; padding: 0 0 0 3px; width: 100%; color: #000; font-size: 10px; }
.member-select svg, .zoom-select svg { position: absolute; right: 4px; color: #666; }
.ruler { display: flex; overflow: hidden; font: 10px/19px var(--song); color: #8c8c8c; border-top: 1px dotted #b4c0d0; border-bottom: 2px solid var(--dark);
  background: linear-gradient(90deg, var(--line) 1px, transparent 1px) 0 0 / 8px 2px repeat-x, linear-gradient(90deg, var(--line) 1px, transparent 1px) 0 100% / 8px 1px repeat-x; }
.ruler span { flex: 0 0 40px; }
.ruler span:first-child { flex-basis: 32px; }
.channels { border-right: 1px solid var(--dark); }
.channels li { height: 16px; border-top: 1px solid #fff; border-bottom: 1px solid var(--line); border-right: 1px solid var(--line); display: flex; }
.channels span { margin-left: auto; padding-right: 7px; font: 10px/16px var(--song); color: #8c8c8c; }
.toggle { width: 16px; height: 14px; display: flex; align-items: center; justify-content: center; border-right: 1px solid var(--line); flex: none; }
.toggle input { appearance: none; width: 9px; height: 9px; border: 1px solid #fff; border-right-color: var(--line); border-bottom-color: var(--line); }
.frames { background:
  linear-gradient(90deg, var(--face) 9px, transparent 9px) 0 0 / 100% 100% no-repeat,
  linear-gradient(90deg, transparent 32px, var(--face) 32px) 0 0 / 40px 100%,
  linear-gradient(90deg, var(--face) 1px, transparent 1px) 0 0 / 8px 100%,
  linear-gradient(var(--face) 1px, transparent 1px) 0 0 / 100% 16px, #fff; }
/* The playhead stands at frame 87 and crosses every channel. */
.playhead { position: absolute; left: 760px; top: 22px; bottom: 0; width: 9px; background: linear-gradient(#e0351b, #e0351b) 4px 0 / 1px 100% no-repeat; }
.playhead b { position: absolute; top: 16px; left: 0; width: 9px; height: 22px; border: 1px solid #e0351b; background: radial-gradient(#e0351b 30%, #999 32%) 0 0 / 2px 2px; }
.playhead i { position: absolute; top: 198px; left: 0; width: 8px; height: 16px; background: linear-gradient(90deg, #000 4px, #e0351b 4px, #e0351b 5px, #000 5px); }
.scroll-v { width: 17px; display: flex; flex-direction: column; align-items: center; padding: 6px 0 4px; color: #666; }
.scroll-v i { width: 16px; height: 17px; background: #c9cdd5; margin-top: 5px; }
.scroll-v .end { margin-top: auto; }
.point-up { transform: rotate(180deg); }
.point-left { transform: rotate(90deg); }
.point-right { transform: rotate(-90deg); }
.score-foot { height: 18px; display: flex; border-top: 1px solid #fff; }
.colors { display: flex; width: 72px; padding: 1px 1px 0; }
.colors i { flex: 1; border-right: 1px solid #888; border-left: 1px solid #fff; }
.c1 { background: #b5cbe8; } .c2, .c3 { background: #d4fbd8; } .c4 { background: #d0d8e2; } .c5 { background: #f9bd5d; }
.score-foot button { width: 15px; border-right: 1px solid #999; }
.scroll-h { flex: 1; display: flex; align-items: center; color: #666; }
.score-foot .scroll-h { padding: 0 12px 0 4px; }
.scroll-h i { width: 17px; height: 100%; background: #c9cdd5; }
.score-foot .scroll-h i { margin-left: 5px; }
.scroll-h .end { margin-left: auto; margin-right: 8px; }

/* Stage */
.stage { flex: 1; min-width: 0; display: flex; flex-direction: column; border-left: 1px solid #fff; margin-left: 1px; }
.stage-view { flex: 1; display: flex; border-left: 1px solid #000; margin-left: 4px; }
.stage-area { flex: 1; display: flex; align-items: center; justify-content: center; padding: 0 2px 2px 0; }
.canvas { width: 642px; height: 482px; background: #fff; border: 1px solid #000; }
.stage-view .scroll-v { width: 18px; border-left: 1px solid #fff; padding: 5px 1px 0 0; }
.stage-view .scroll-v i { margin-top: 341px; }
.stage-zoom { height: 18px; display: flex; border-left: 1px solid #000; margin-left: 4px; color: #666; }
.zoom-select { width: 96px; }
.zoom-select select { padding-left: 6px; }
.stage-zoom .scroll-h { border-top: 1px solid #fff; padding: 0 4px 0 5px; justify-content: space-between; }
.stage-zoom .scroll-h i { margin-left: 13px; }
.scroll-corner { width: 18px; padding-right: 1px; border-left: 1px solid #fff; display: flex; align-items: center; justify-content: center; }
.stage-controls { height: 21px; display: flex; align-items: center; border-left: 1px solid #000; margin-left: 4px; }
.stage-controls button { width: 22px; height: 17px; margin-left: 2px; }
.stage-controls .pressed { margin: 0 -1px 0 3px; }
.stage-controls .wide { width: 32px; margin-left: 13px; }
.stage-controls hr { margin-left: 4px; }
.stage-controls .double { width: 6px; background: none; border: solid var(--line); border-width: 0 1px; }

/* Cast */
.cast { flex: 1; min-height: 0; display: flex; flex-direction: column; }
.cast-bar { height: 28px; display: flex; align-items: center; padding: 0 6px; flex: none; }
.cast-bar button { width: 18px; height: 18px; }
.cast-bar hr { margin: 0 4px 0 6px; }
.cast-bar hr + button:not(.drag) { margin-right: 2px; }
.cast-bar .drag { border: 1px solid var(--dark); margin-right: 1px; }
.member-name { flex: 1; height: 17px; background: var(--face); border: 1px solid var(--dark); border-right-color: #fff; border-bottom-color: #fff; margin-right: 12px; min-width: 0; }
.cast-bar .info { margin-left: 1px; }
.member-number { width: 36px; height: 18px; background: var(--face); border: 1px solid var(--line); border-right-color: #fff; border-bottom-color: #fff; text-align: center; font: 10px/14px var(--ui); margin-left: 2px; }
.cast-list { flex: 1; margin: 0 1px 2px; background: #fff; border-left: 1px solid var(--dark); border-top: 1px solid var(--dark); }
.cast-list table { border-collapse: collapse; table-layout: fixed; width: 645px; margin-top: 1px; font: 12px/23px var(--menu); }
.cast-list th { font-weight: normal; text-align: left; padding: 0 0 0 7px; border-right: 1px dotted #c0c8d4; }
.cast-list .w-name { width: 149px; padding-left: 6px; }
.w-num { width: 30px; }
.cast-list .w-num { text-align: right; padding-right: 5px; }
.w-mod { width: 20px; }
.w-script { width: 50px; }
.w-type { width: 75px; }
.w-modified { width: 120px; }

/* Inspectors */
.inspectors { display: flex; flex-direction: column; min-width: 0; min-height: 0; overflow: hidden; }
.movie { height: 48px; display: flex; padding: 4px 7px 0 4px; }
.movie-icon { width: 38px; height: 38px; background: #d3d9e3; border: 1px solid; border-color: #888 #fff #fff #888; border-width: 2px 1px 1px 2px; display: grid; }
.movie-icon > * { grid-area: 1 / 1; color: #fff; }
.movie-icon .dir { font: bold 8px/10px var(--ui); padding: 3px 0 0 6px; }
.movie-icon .di { font: 16px/18px var(--ui); padding: 13px 0 0 11px; }
.movie p { flex: 1; padding-left: 4px; line-height: 12px; font-size: 10px; }
.movie button { margin: 14px 0 0 12px; height: 30px; }
.tabs.song, .name, .size label, .library-bar input, .components li { font: 11px/13px var(--song); -webkit-text-stroke: .3px; }
.tabs.song a { padding-left: 3px; padding-right: 4px; }
.tabs.song .tab { padding: 3px 10px 0 4px; }
.tabs.song .ruled { padding-left: 4px; }
.guides { font-size: 10px; padding: 3px 0 0 8px; }
.row { display: flex; align-items: center; }
.name { width: 40px; }
.row.new .name { text-align: right; padding-right: 6px; }
.swatch.mini { width: 18px; height: 18px; }
.swatch.blue { background: #0f6bd8; }
.swatch.red { background: #e0351b; }
.guides label { display: flex; align-items: center; gap: 2px; }
.checks { padding: 12px 0 0 40px; display: grid; gap: 6px; }
.checks label { height: 13px; }
.checks input { appearance: none; width: 13px; height: 13px; background: #fff; border: 1px solid #2b3434; }
.checks input:checked { display: grid; place-items: center; }
.checks input:checked::before { content: ""; width: 8px; height: 4px; border: solid #444; border-width: 0 0 1px 1px; transform: rotate(-45deg); }
.row.new { margin-top: 13px; }
.guide-new { width: 23px; height: 22px; background: #fff; border-left: 1px solid #666; border-top: 1px solid #666; margin-right: 7px; }
.remove { width: 73px; height: 20px; background: #d7dee8; border: 1px solid #9dabc3; margin-left: 1px; }
.fold { margin: 22px 0 0 -4px; height: 8px; background: linear-gradient(var(--line), var(--line)) 11px 0 / 100% 1px no-repeat; padding-top: 1px; }
.grid-row .name { width: 30px; }
.grid-row label { margin-left: 7px; gap: 1px; }
.grid-row .lines { margin-left: 12px; }
.grid-row input { appearance: none; width: 13px; height: 13px; border: 1px solid #2b3434; border-radius: 50%; background: #fff; }
.grid-row input:checked { background: radial-gradient(#222b2b 3px, #fff 4px); }
.grid-checks { padding: 7px 0 0 30px; }
.row.size { margin-top: 13px; }
.row.size label { width: 20px; justify-content: center; }
.row.size label:first-child { width: 30px; padding-left: 6px; }
.row.size input { width: 40px; height: 17px; border: 1px solid #fff; border-left: 2px solid #777; border-top: 2px solid #777; padding: 0 3px; background: #fff; }
.library { margin-top: auto; }
.library-bar { height: 32px; border-bottom: 1px solid var(--line); display: flex; align-items: center; padding: 0 4px 0 8px; }
.library-bar button + button { margin-left: 9px; }
.library-bar input { flex: 1; min-width: 0; height: 22px; background: var(--face); border: 1px solid var(--line); border-right-color: #fff; border-bottom-color: #fff; margin-left: 15px; padding: 1px 4px 0; }
.components { padding-top: 16px; }
.components li { height: 32px; display: flex; gap: 3px; line-height: 11px; }
.components span { width: 31px; height: 31px; background: #fff; border-left: 1px solid #777; border-top: 1px solid #777; display: flex; align-items: center; justify-content: center; }
.components .dvd { flex-direction: column; }
.components .dvd b { font: 9px/9px var(--ui); }
.stepper { display: flex; align-items: center; gap: 1px; border: 1px solid #444; height: 12px; padding: 0 1px; font: bold 7px/10px var(--ui); }
.more { width: 100%; height: 30px; padding-top: 12px; }
.panel-head.design { height: 19px; margin-bottom: 1px; }

/* Desktop */
.taskbar { height: 8px; background: #1e2a2a; overflow: hidden; flex: none; display: flex; color: #fff; font: 12px/14px var(--menu); padding-top: 3px; }
.taskbar i { width: 49px; height: 8px; background: #4a5454; margin: -3px 0 0 440px; }
.taskbar time { margin-left: auto; padding-right: 74px; }
.ime { position: absolute; right: 4px; top: 929px; height: 26px; width: 216px; padding-left: 22px; background: #fff; border: 1px dotted #a9c5e3; display: flex; align-items: center; }
.ime-logo { position: absolute; left: -11px; top: -4px; }
.ime button { width: 24px; color: #0c6de0; fill: #0c6de0; font: bold 15px/20px "Noto Sans CJK SC", sans-serif; }
```
FILE: score.js
```js
// Builds one header row for each sprite channel of the score.
const channels = document.getElementById("channels");
for (let n = 1; n <= 38; n++) {
  const row = document.createElement("li");
  row.innerHTML = `<label class="toggle"><input type="checkbox" aria-label="Channel ${n}"></label><span>${n}</span>`;
  channels.append(row);
}
```
